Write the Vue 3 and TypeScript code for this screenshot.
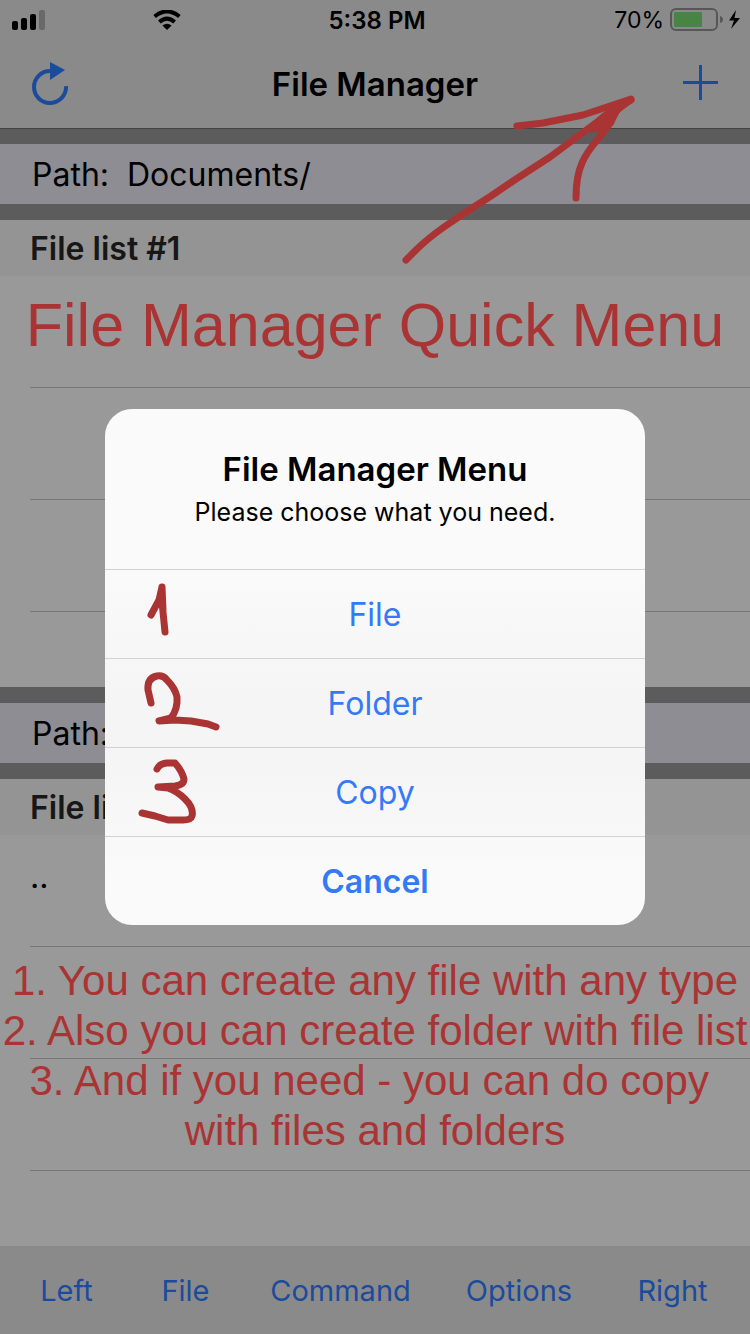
<script setup lang="ts">
interface Pane {
  id: number
  path: string
  title: string
  rows: string[]
}

const panes: Pane[] = [
  { id: 1, path: 'Documents/', title: 'File list #1', rows: ['..', '', ''] },
  { id: 2, path: 'Documents/', title: 'File list #2', rows: ['..', '', ''] },
]

const notes: string[] = [
  '1. You can create any file with any type',
  '2. Also you can create folder with file list',
  '3. And if you need - you can do copy\u00a0',
  'with files and folders',
]

const tabs: string[] = ['Left', 'File', 'Command', 'Options', 'Right']

interface Action {
  label: string
  mark: string
}

const actions: Action[] = [
  { label: 'File', mark: 'M46 45 L54 30 L57 17 L57 32 L60 62 M57 17 L58 40' },
  { label: 'Folder', mark: 'M46 44 L43 31 Q42 19 52 17 Q58 16 62 21 Q70 29 72 38 Q73 50 66 59 L54 62 L70 61 L86 62 L103 65 L111 68' },
  { label: 'Copy', mark: 'M52 21 Q54 16 62 15 L70 15 Q77 23 79 31 Q79 37 70 38 L53 39 L63 40 Q72 43 80 51 Q89 60 87 68 Q86 72 78 72 L63 72 L50 68 L37 65' },
]
</script>

<template>
  <div class="screen">
    <header class="top">
      <div class="status">
        <div class="status-left">
          <svg class="signal" viewBox="0 0 34 20" aria-hidden="true">
            <rect x="0" y="11" width="6" height="9" rx="2" />
            <rect x="9" y="8" width="6" height="12" rx="2" />
            <rect x="18" y="4" width="6" height="16" rx="2" />
            <rect x="27" y="0" width="6" height="20" rx="2" fill="#696969" />
          </svg>
          <svg class="wifi" viewBox="0 0 28 20" aria-hidden="true">
            <path d="M1.600 6.500 Q14 -3.700 26.400 6.500" fill="none" stroke="#000" stroke-width="4" />
            <path d="M6.400 12 Q14 5.400 21.600 12" fill="none" stroke="#000" stroke-width="4" />
            <path d="M9.400 15.600 Q14 12 18.600 15.600 L14 20 Z" />
          </svg>
        </div>
        <span class="clock">5:38 PM</span>
        <div class="status-right">
          <span class="charge">70%</span>
          <svg class="battery" viewBox="0 0 72 24" aria-hidden="true">
            <rect x="1" y="1" width="46" height="21" rx="5" fill="none" stroke="#575757" stroke-width="2" />
            <rect x="4" y="4" width="28" height="15" rx="1" fill="#478547" />
            <path d="M50 8 Q53 9 53 11.500 Q53 14 50 15 Z" fill="#575757" />
            <path d="M66 2 L59 12.500 H64 L61 21 L70 10 H64.500 Z" />
          </svg>
        </div>
      </div>
      <nav class="nav">
        <button class="icon-button" type="button" aria-label="Refresh">
          <svg class="refresh" viewBox="0 0 36 44" aria-hidden="true">
            <path d="M18 10 A16 16 0 1 0 34 25" fill="none" stroke="#1b4b9b" stroke-width="4" />
            <path d="M18 1 L33 9 L18 19 Z" fill="#1b4b9b" />
          </svg>
        </button>
        <h1>File Manager</h1>
        <button class="icon-button end" type="button" aria-label="Add">
          <svg class="plus" viewBox="0 0 35 35" aria-hidden="true">
            <path d="M0 17.500 H35 M17.500 0 V35" stroke="#1b4b9b" stroke-width="3" />
          </svg>
        </button>
      </nav>
    </header>

    <main class="panes">
      <section v-for="pane in panes" :key="pane.id" class="pane">
        <div class="path">Path:&nbsp; {{ pane.path }}</div>
        <div class="files">
          <h2>{{ pane.title }}</h2>
          <ul>
            <li v-for="(row, i) in pane.rows" :key="i">{{ row }}</li>
          </ul>
        </div>
      </section>
    </main>

    <footer class="toolbar">
      <button v-for="tab in tabs" :key="tab" type="button">{{ tab }}</button>
    </footer>

    <p class="headline">File Manager Quick Menu</p>
    <div class="notes">
      <p v-for="note in notes" :key="note">{{ note }}</p>
    </div>
    <svg class="arrow" viewBox="0 0 240 180" aria-hidden="true">
      <path d="M11 170 L21 160 Q32 149 49 137 L71 122 L96 106 L118 91 L155 67 L190 41 L213 24 L236 10" />
      <path d="M122 36 L148 33 L188 25 L212 17 L236 9 L221 21 L216 32 L203 49 Q191 63 187 73 Q181 86 181 108" />
      <path class="solid" d="M195 39 L208 27 L226 14 L216 30 L209 38 Z" />
    </svg>

    <div class="overlay">
      <div class="dialog" role="dialog" aria-labelledby="dialog-title" aria-describedby="dialog-message">
        <div class="dialog-head">
          <h2 id="dialog-title">File Manager Menu</h2>
          <p id="dialog-message">Please choose what you need.</p>
        </div>
        <button v-for="action in actions" :key="action.label" type="button">
          <svg class="mark" viewBox="0 0 130 88" aria-hidden="true">
            <path :d="action.mark" />
          </svg>
          {{ action.label }}
        </button>
        <button class="cancel" type="button">Cancel</button>
      </div>
    </div>
  </div>
</template>

<style>
body {
  margin: 0;
}
</style>

<style scoped>
.screen {
  position: relative;
  display: flex;
  flex-direction: column;
  min-height: 100vh;
  overflow: hidden;
  background: #5c5c5c;
  color: #000;
  font-family: Inter, "Liberation Sans", sans-serif;
  font-size: 32px;
}

h1,
h2,
p,
ul {
  margin: 0;
  padding: 0;
}

button {
  margin: 0;
  padding: 0;
  border: 0;
  background: none;
  color: #1b4b9b;
  font: inherit;
}

.top {
  background: #8a8a8a;
  border-bottom: 1px solid #434343;
}

.status {
  display: grid;
  grid-template-columns: 1fr auto 1fr;
  align-items: center;
  height: 40px;
  padding: 0 8px 0 12px;
  font-size: 24px;
}

.status-left {
  display: flex;
  gap: 107px;
}

.signal {
  width: 34px;
  height: 20px;
}

.wifi {
  width: 28px;
  height: 20px;
}

.clock {
  font-weight: 600;
}

.status-right {
  display: flex;
  align-items: center;
  justify-content: flex-end;
  gap: 6px;
}

.charge {
  font-size: 23px;
}

.battery {
  width: 72px;
  height: 24px;
}

.nav {
  display: grid;
  grid-template-columns: 1fr auto 1fr;
  align-items: center;
  height: 88px;
  padding: 0 32px;
}

.nav h1 {
  font-size: 33px;
  font-weight: 600;
}

.icon-button {
  display: flex;
  padding-bottom: 2px;
}

.icon-button.end {
  justify-content: flex-end;
  padding-bottom: 4px;
}

.refresh {
  width: 36px;
  height: 44px;
}

.plus {
  width: 35px;
  height: 35px;
}

.panes {
  display: flex;
  flex: 1;
  flex-direction: column;
  gap: 16px;
  padding-top: 15px;
}

.pane {
  display: flex;
  flex: 1;
  flex-direction: column;
  gap: 16px;
}

.path {
  padding: 2px 32px 0;
  background: #8e8d93;
  line-height: 58px;
}

.files {
  flex: 1;
  background: #999;
}

.files h2 {
  padding: 2px 30px 0;
  background: #949494;
  color: #171717;
  font-size: 32px;
  font-weight: 600;
  line-height: 54px;
}

.files ul {
  margin-left: 30px;
  list-style: none;
}

.files li {
  box-sizing: border-box;
  height: 112px;
  border-bottom: 1px solid #767676;
  line-height: 84px;
}

.toolbar {
  display: grid;
  grid-template-columns: 133fr 105fr 205fr 152fr 155fr;
  height: 88px;
  background: #8a8a8a;
  font-size: 29px;
}

.headline,
.notes {
  position: absolute;
  left: 0;
  right: 0;
  color: #aa3434;
  font-family: "Liberation Sans", Arial, sans-serif;
  text-align: center;
  white-space: nowrap;
}

.headline {
  top: 290px;
  font-size: 61px;
  line-height: 70px;
}

.notes {
  top: 956px;
  font-size: 42px;
  line-height: 50px;
}

.arrow {
  position: absolute;
  top: 90px;
  right: 115px;
  width: 240px;
  height: 180px;
}

.arrow path,
.mark path {
  fill: none;
  stroke: #aa3434;
  stroke-width: 7;
  stroke-linecap: round;
  stroke-linejoin: round;
}

.arrow .solid {
  fill: #aa3434;
}

.overlay {
  position: absolute;
  inset: 0;
  display: flex;
  align-items: center;
  justify-content: center;
}

.dialog {
  width: 72%;
  overflow: hidden;
  border-radius: 27px;
  background: linear-gradient(#fafafa 30%, #f5f5f5 56%, #f5f5f5 70%, #fafafa 90%);
  text-align: center;
}

.dialog-head {
  box-sizing: border-box;
  height: 160px;
  padding-top: 39px;
}

.dialog-head h2 {
  font-size: 33px;
  font-weight: 600;
  line-height: 42px;
}

.dialog-head p {
  font-size: 25px;
  line-height: 44px;
}

.dialog button {
  position: relative;
  display: block;
  width: 100%;
  height: 89px;
  border-top: 1px solid #d2d2d5;
  color: #347af6;
}

.dialog .cancel {
  font-weight: 600;
}

.mark {
  position: absolute;
  top: 0;
  left: 0;
  width: 130px;
  height: 88px;
}
</style>
